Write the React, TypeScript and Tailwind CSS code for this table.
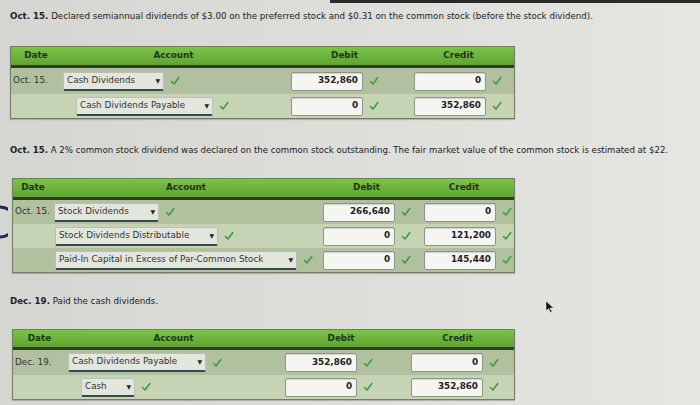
import React from "react";

const Check = () => (
  <svg width="10" height="10" viewBox="0 0 10 10" className="shrink-0">
    <path d="M1.5 5.5 L4 8 L8.8 1.5" fill="none" stroke="#3f9a3a" strokeWidth="1.5" strokeLinecap="round" strokeLinejoin="round" />
  </svg>
);

const Select = ({ label, w }: { label: string; w: number }) => (
  <div
    className="flex h-[19px] items-center justify-between rounded-[2px] border border-[#b9c2b2] border-b-2 border-b-[#36474f] bg-[#e2e6dc] pl-[3px] pr-[3px] text-[8.8px] text-[#333]"
    style={{ width: w }}
  >
    <span>{label}</span>
    <span className="text-[6px] leading-none text-[#222]">▼</span>
  </div>
);

const Input = ({ v }: { v: string }) => (
  <div className="flex h-[19px] w-[72px] items-center justify-end rounded-[2px] border border-[#8e968a] bg-[#f5f5f2] pr-[4px] text-[8.8px] font-bold text-[#222] shadow-[inset_0_1px_1px_rgba(0,0,0,0.15)]">
    {v}
  </div>
);

type Row = { date?: string; acct: string; aw: number; indent: number; debit: string; credit: string };

const Table = ({
  rows,
  dateW,
  acctW,
  debitW,
  debitPad,
  creditPad,
  ml,
  rowH,
  headH,
}: {
  rows: Row[];
  dateW: number;
  acctW: number;
  debitW: number;
  debitPad: number;
  creditPad: number;
  ml: number;
  rowH: number[];
  headH: number;
}) => (
  <div className="border border-[#6f7e62] shadow-[0_1px_1px_rgba(0,0,0,0.2)]" style={{ marginLeft: ml, width: 515 - ml }}>
    <div
      className="flex items-center border-b-[3px] border-b-[#2b3f22] bg-gradient-to-b from-[#7cc24a] to-[#5fa532] text-[8.8px] font-bold text-[#1f3514]"
      style={{ height: headH }}
    >
      <div className="text-center" style={{ width: dateW }}>Date</div>
      <div className="text-center" style={{ width: acctW }}>Account</div>
      <div className="text-center" style={{ width: debitW }}>Debit</div>
      <div className="flex-1 text-center">Credit</div>
    </div>
    {rows.map((r, i) => (
      <div
        key={i}
        className={`flex items-center ${i % 2 === 0 ? "bg-[#b1c1a0]" : "bg-[#c6d3b5]"}`}
        style={{ height: rowH[i] }}
      >
        <div className="pl-[2px] text-[8.8px] text-[#333]" style={{ width: dateW }}>{r.date ?? ""}</div>
        <div className="flex items-center gap-[6px]" style={{ width: acctW, paddingLeft: r.indent }}>
          <Select label={r.acct} w={r.aw} />
          <Check />
        </div>
        <div className="flex items-center gap-[6px]" style={{ width: debitW, paddingLeft: debitPad }}>
          <Input v={r.debit} />
          <Check />
        </div>
        <div className="flex flex-1 items-center gap-[6px]" style={{ paddingLeft: creditPad }}>
          <Input v={r.credit} />
          <Check />
        </div>
      </div>
    ))}
  </div>
);

export default function App() {
  return (
    <div
      className="relative h-[405px] w-[700px] overflow-hidden bg-gradient-to-r from-[#d5d5d1] via-[#dddddA] to-[#e5e5e2] text-[#222]"
      style={{ fontFamily: '"DejaVu Sans", Verdana, sans-serif' }}
    >
      <div className="absolute left-[330px] right-0 top-0 h-[3px] bg-[#2a2a2a]" />
      <div className="pl-[10px] pt-[10px] text-[8.7px] leading-[12px]">
        <b>Oct. 15.</b> Declared semiannual dividends of $3.00 on the preferred stock and $0.31 on the common stock (before the stock dividend).
      </div>
      <div className="mt-[24px]">
        <Table
          ml={10}
          dateW={50}
          acctW={225}
          debitW={117}
          debitPad={5}
          creditPad={11}
          headH={21}
          rowH={[26, 24]}
          rows={[
            { date: "Oct. 15.", acct: "Cash Dividends", aw: 101, indent: 2, debit: "352,860", credit: "0" },
            { acct: "Cash Dividends Payable", aw: 137, indent: 15, debit: "0", credit: "352,860" },
          ]}
        />
      </div>
      <div className="mt-[25px] pl-[10px] text-[8.6px] leading-[12px]">
        <b>Oct. 15.</b> A 2% common stock dividend was declared on the common stock outstanding. The fair market value of the common stock is estimated at $22.
      </div>
      <div className="mt-[22px]">
        <Table
          ml={12}
          dateW={40}
          acctW={266}
          debitW={95}
          debitPad={4}
          creditPad={10}
          headH={21}
          rowH={[24, 24, 24]}
          rows={[
            { date: "Oct. 15.", acct: "Stock Dividends", aw: 105, indent: 1, debit: "266,640", credit: "0" },
            { acct: "Stock Dividends Distributable", aw: 163, indent: 2, debit: "0", credit: "121,200" },
            { acct: "Paid-In Capital in Excess of Par-Common Stock", aw: 242, indent: 2, debit: "0", credit: "145,440" },
          ]}
        />
      </div>
      <div className="mt-[22px] pl-[10px] text-[8.7px] leading-[12px]">
        <b>Dec. 19.</b> Paid the cash dividends.
      </div>
      <div className="mt-[22px]">
        <Table
          ml={12}
          dateW={53}
          acctW={215}
          debitW={120}
          debitPad={4}
          creditPad={10}
          headH={20}
          rowH={[25, 24]}
          rows={[
            { date: "Dec. 19.", acct: "Cash Dividends Payable", aw: 138, indent: 2, debit: "352,860", credit: "0" },
            { acct: "Cash", aw: 54, indent: 15, debit: "0", credit: "352,860" },
          ]}
        />
      </div>
      <svg className="absolute left-0 top-[205px]" width="8" height="34" viewBox="0 0 8 34">
        <path d="M0 2 A 15 15 0 0 1 0 32" fill="none" stroke="#1d2a55" strokeWidth="3" />
      </svg>
      <svg className="absolute left-[545px] top-[301px]" width="10" height="12" viewBox="0 0 10 12">
        <path d="M1 0 L1 10 L3.5 7.5 L5.5 11.5 L7 10.8 L5 7 L8.5 7 Z" fill="#111" stroke="#eee" strokeWidth="0.5" />
      </svg>
    </div>
  );
}
